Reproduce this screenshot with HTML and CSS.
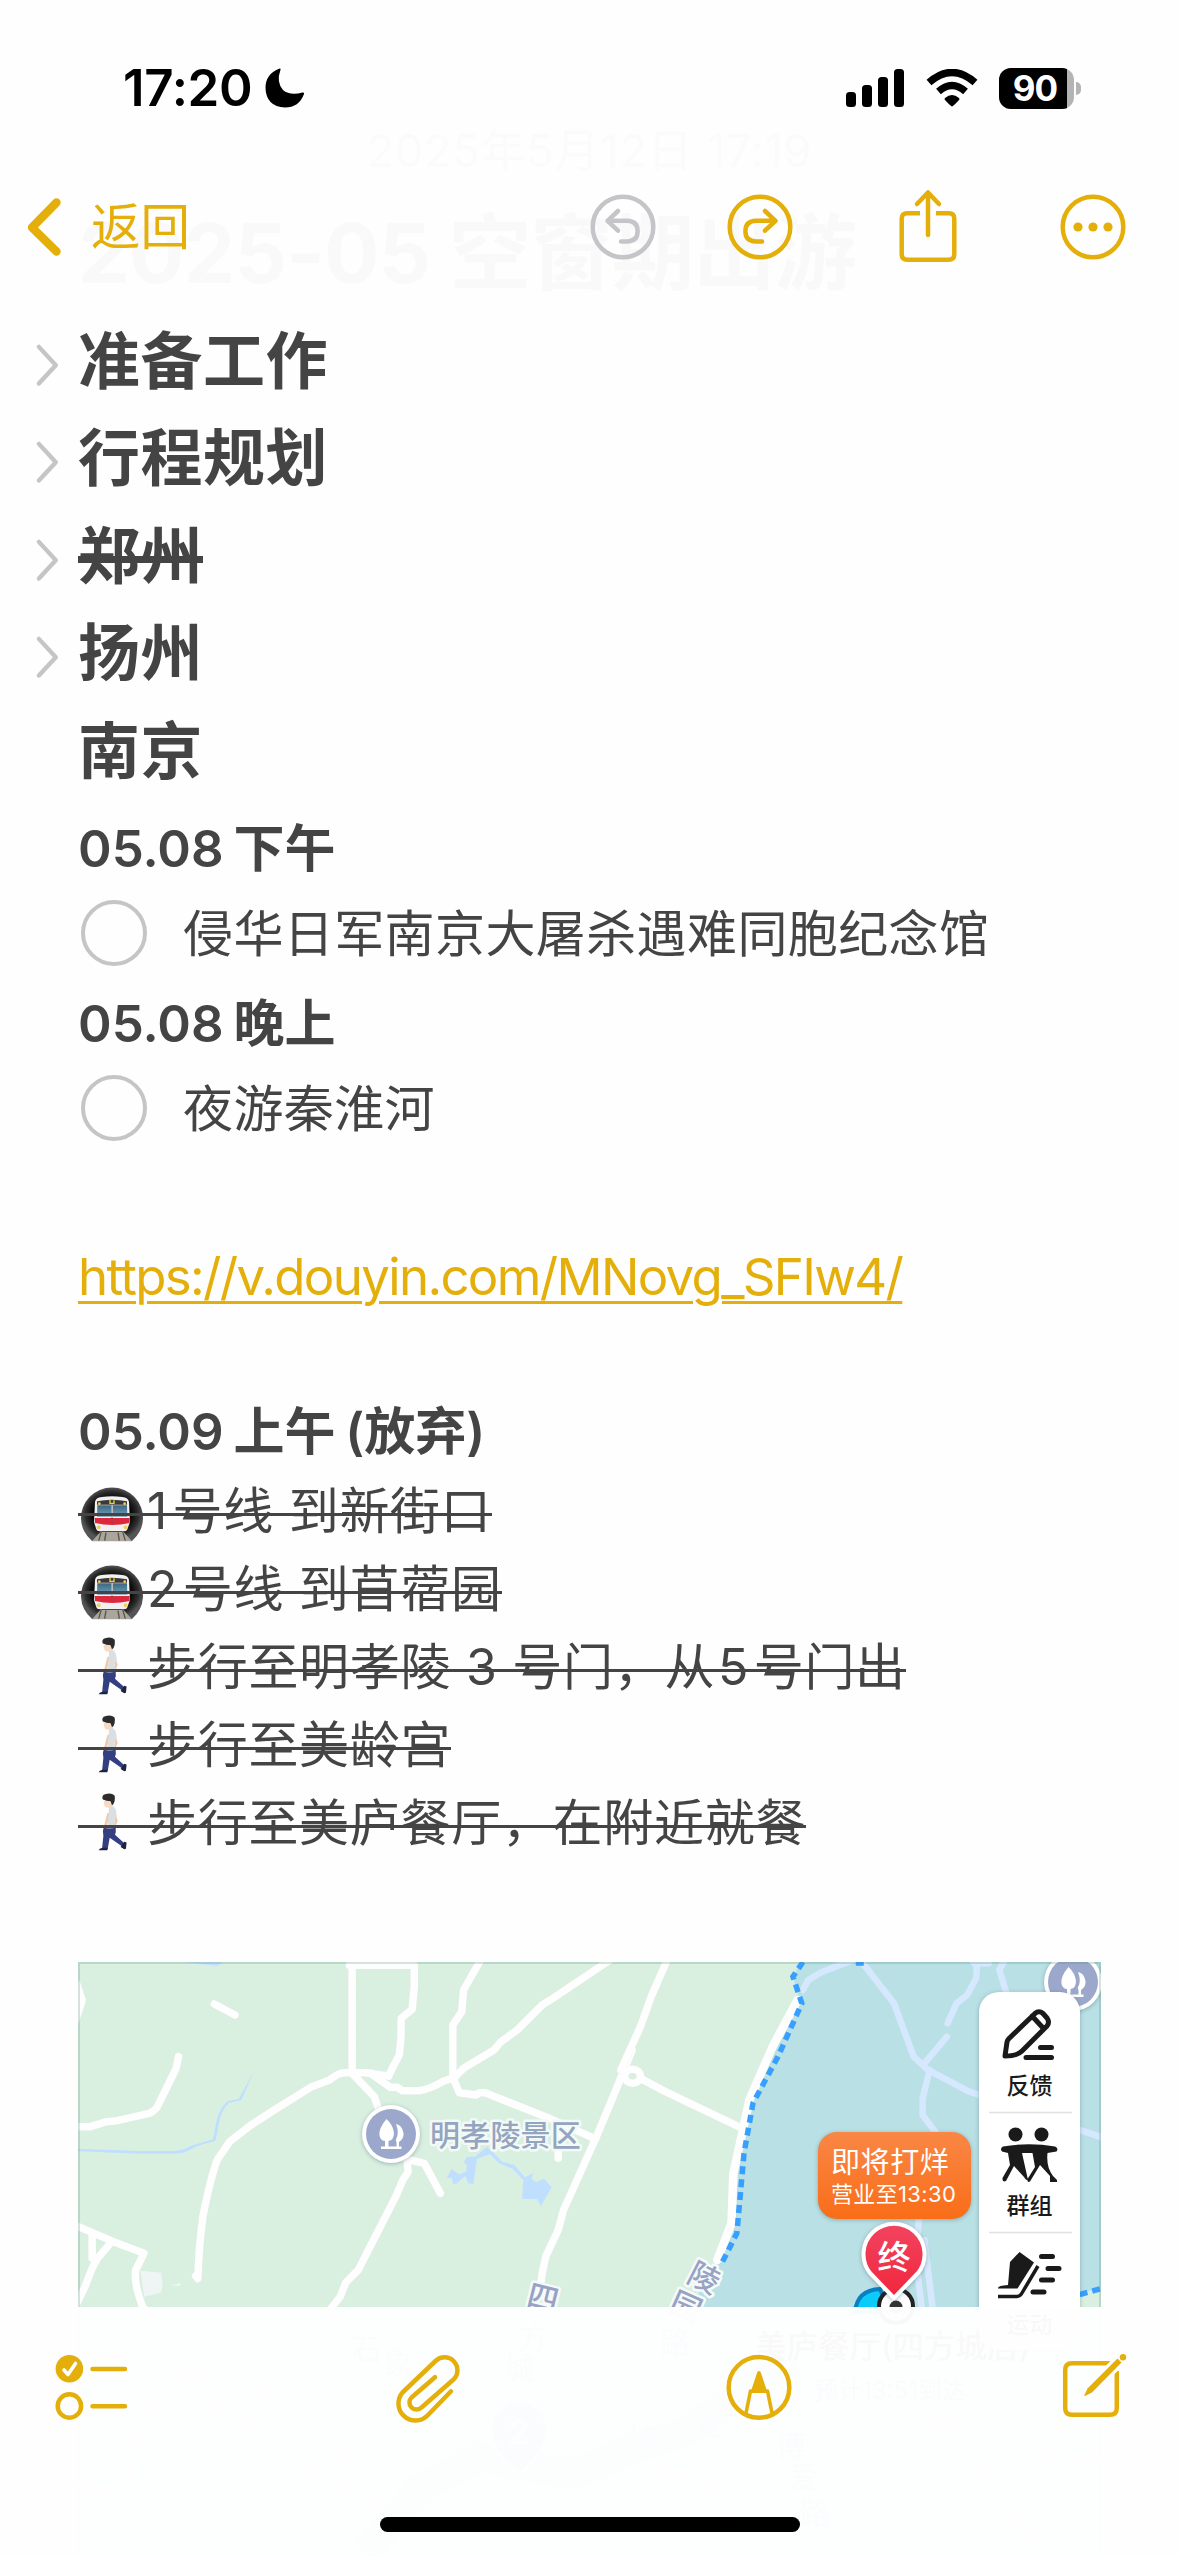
FILE: index.html
```html
<!DOCTYPE html>
<html lang="zh-CN">
<head>
<meta charset="utf-8">
<title>备忘录</title>
<link rel="stylesheet" href="styles.css">
</head>
<body>
<svg width="0" height="0" class="defs" aria-hidden="true">
  <defs>
    <linearGradient id="badge" x1="0" y1="0" x2="0" y2="1"><stop offset="0" stop-color="#f98746"/><stop offset="1" stop-color="#f96d17"/></linearGradient>
    <linearGradient id="pin" x1="0" y1="0" x2="0" y2="1"><stop offset="0" stop-color="#f24460"/><stop offset="1" stop-color="#f0263c"/></linearGradient>
    <radialGradient id="tunnel"><stop offset=".6" stop-color="#050505"/><stop offset=".85" stop-color="#2c2c2c"/><stop offset="1" stop-color="#555"/></radialGradient>
    <linearGradient id="glass" x1="0" y1="0" x2="0" y2="1"><stop offset="0" stop-color="#3f6680"/><stop offset="1" stop-color="#6ba3c0"/></linearGradient>
    <symbol id="metro" viewBox="234 310 207 180">
      <path d="M276 481A93 91 0 1 1 396 481Z" fill="url(#tunnel)"/>
      <path d="M276 482l25-28h70l25 28z" fill="#aaa69c"/>
      <path d="M304 452l-8 28M368 452l8 28M318 456l-4 24M354 456l4 24" stroke="#5a544c" stroke-width="4"/>
      <path d="M285 364q2-13 20-15 31-4 62 0 18 2 20 15l3 60-8 22q-1 6-10 6h-73q-9 0-10-6l-7-22z" fill="#f1f1f1"/>
      <path d="M291 362q45-10 90 0v10h-90z" fill="#3a3a3a"/>
      <path d="M292 374h42v34h-43zM339 374h42l1 34h-43z" fill="url(#glass)"/>
      <path d="M284 412h105v15q-52 12-104 0z" fill="#dc2a3c"/>
      <path d="M330 357v11h12v-9" fill="none" stroke="#e6d632" stroke-width="4"/>
      <g fill="#f3cf63"><circle cx="298" cy="369" r="4"/><circle cx="374" cy="369" r="4"/><circle cx="296" cy="440" r="6"/><circle cx="377" cy="440" r="6"/></g>
      <path d="M336 372v54" stroke="#555" stroke-width="2"/>
    </symbol>
    <symbol id="walker" viewBox="234 765 207 190">
      <path d="M311 795q0 15 7 19 6 2 11-1l8 10 2-30z" fill="#f8d9c1"/>
      <path d="M307 787q-1-9 8-12 18-6 28 3 4 5 1 17-2 9-8 13-3-9-5-13-12 1-18-3-6 0-6-5z" fill="#2d2b2c"/>
      <path d="M325 835l-9 36 3 8M342 835l7 20-11 28" fill="none" stroke="#f2c9a8" stroke-width="8" stroke-linecap="round"/>
      <path d="M327 813q14-9 21 10l3 22-8 4 5 30-26 2 3-35z" fill="#dcdfe2"/>
      <path d="M311 875q14 6 36 1 2 14-2 21l30 27-7 9-39-27-6 34h-17l4-40q-4-14 1-25z" fill="#333f80"/>
      <path d="M296 944q1-6 11-8h16l-1 8zM362 934l11-16 7 2-2 19-5 2z" fill="#1c2240"/>
    </symbol>
    <g id="trees">
      <circle r="29" fill="#fff"/><circle r="25" fill="#9ba8cc"/>
      <path d="M-4.5-15Q-13-5-11.500 2-10 7-6 7V12.500H-10V15H10.500V12.500H8V8Q13 5 12.500-1 11-9 5-10 8-2 6 3 4 6 5.500 8V12.500H-2.500V7Q3 6 3-1 2-9-4.500-15Z" fill="#fff"/>
    </g>
  </defs>
</svg>
<div class="screen">
  <main class="note">
    <p class="date">2025年5月12日 17:19</p>
    <h1 class="title">2025-05 空窗期出游</h1>

    <h2 class="heading"><svg class="fold" viewBox="0 0 42 97"><path d="M2 34 20 53.500 2 73"/></svg>准备工作</h2>
    <h2 class="heading"><svg class="fold" viewBox="0 0 42 97"><path d="M2 34 20 53.500 2 73"/></svg>行程规划</h2>
    <h2 class="heading"><svg class="fold" viewBox="0 0 42 97"><path d="M2 34 20 53.500 2 73"/></svg><span class="gone thick">郑州</span></h2>
    <h2 class="heading"><svg class="fold" viewBox="0 0 42 97"><path d="M2 34 20 53.500 2 73"/></svg>扬州</h2>
    <h2 class="heading plain">南京</h2>

    <h3 class="sub">05.08 下午</h3>
    <div class="todo"><span class="box"></span><span>侵华日军南京大屠杀遇难同胞纪念馆</span></div>
    <h3 class="sub">05.08 晚上</h3>
    <div class="todo"><span class="box"></span><span>夜游秦淮河</span></div>
    <p class="link"><a>https://v.douyin.com/MNovg_SFIw4/</a></p>
    <h3 class="sub dropped">05.09 上午 (放弃)</h3>
    <p class="line"><span class="gone"><svg class="emoji metro"><use href="#metro"/></svg><span><span class="digit">1</span>号线 到新街口</span></span></p>
    <p class="line"><span class="gone"><svg class="emoji metro"><use href="#metro"/></svg><span><span class="digit">2</span>号线 到苜蓿园</span></span></p>
    <p class="line"><span class="gone"><svg class="emoji"><use href="#walker"/></svg><span>步行至明孝陵 3 号门，从<span class="digit mid">5</span>号门出</span></span></p>
    <p class="line"><span class="gone"><svg class="emoji"><use href="#walker"/></svg><span>步行至美龄宫</span></span></p>
    <p class="line"><span class="gone"><svg class="emoji"><use href="#walker"/></svg><span>步行至美庐餐厅，在附近就餐</span></span></p>

    <svg class="map" viewBox="0 0 1023 594">
      <rect width="1023" height="594" fill="#d9f0e1"/>
      <g transform="translate(541 -22) scale(.35714 .33333)">
        <path d="M512 60L487 110 505 180 435 320 367 480 345 580 318 860 272 970 190 1120 1290 1120V1060L1352 1045V60Z" fill="#b9e0e4"/>
      </g>
      <g class="water" transform="translate(-18 -22) scale(.35714 .33333)">
        <path d="M345 66H455L440 78Z"/>
        <path d="M50 626L220 633H320Q345 632 365 618L428 598 440 535Q450 500 470 483L500 477 543 395 508 480 472 489Q455 510 448 535L436 600Q430 606 415 608L380 620Q355 638 325 641H220L50 634Z"/>
        <path d="M1083 714L1096 687 1118 703 1137 695 1139 676 1131 665 1140 650 1162 650 1195 620 1208 632 1238 665 1272 675 1302 712 1326 698 1320 716 1334 726 1355 716 1377 742 1361 771 1347 798 1335 777H1294L1297 720 1268 688 1228 668 1204 643 1168 656 1163 690 1158 732 1143 730 1135 708 1110 731 1100 732 1098 715Z"/>
        <path d="M225 992L283 998 288 1030 283 1058 236 1070ZM310 1036L338 1029 335 1038Z" fill="#eff4f5"/>
      </g>
      <g class="roads" transform="translate(-18 -22) scale(.35714 .33333)">
        <g id="west">
          <path d="M818 60V398M810 76H992V140L986 208 955 235V290L950 345 935 375 920 408"/>
          <path d="M380 1008L386 1016Q388 930 400 830 420 720 440 660L475 605 535 555 600 510 705 440 755 420Q780 398 795 398H855L920 408"/>
          <path d="M870 400L925 442H945L958 452H1005Q1030 450 1075 423L1105 412 1130 385 1215 330 1235 305 1280 270 1350 195 1380 175 1540 60"/>
          <path d="M1178 60L1130 150 1125 215 1100 255V412L1118 458 1165 465 1175 458H1190L1370 535 1500 597M818 400L880 470 893 510"/>
          <path d="M980 660L1020 670 1035 700 1065 760M972 665L975 695 960 720 940 770 835 990 800 1028 785 1070 755 1110"/>
          <path d="M1395 560V655M1602 330L1545 480 1500 595 1410 810 1395 870 1360 950 1350 1000 1345 1040"/>
          <path d="M40 560H85L130 545 160 542 250 520Q270 510 275 495L325 385 332 350M432 192L490 225"/>
          <path d="M40 855L150 905 235 940 212 990Q205 1030 235 1110M90 885V955M145 905L105 955 90 985 70 1040 45 1095M46 130L62 180 44 240"/>
        </g>
      </g>
      <g class="roads" transform="translate(541 -22) scale(.35714 .33333)">
        <path d="M135 60L90 170 60 260 5 390M60 415L130 455 335 560"/>
        <path d="M500 180L430 320 365 480 345 580 320 700 315 850 275 960" class="wide"/>
        <ellipse cx="38" cy="409" rx="22" ry="21"/>
      </g>
      <g class="blue-roads" transform="translate(541 -22) scale(.35714 .33333)">
        <path d="M515 150L530 120 570 95 650 62M680 66L770 190 825 350 865 390 980 455 1010 465M870 390L850 475V525L885 575M918 290L855 370M988 60L1002 80 1000 115 975 165 945 190 920 250M1035 70H1000M1080 60L1065 90 1085 160M1285 568L1352 592M840 837L830 950 850 1120M855 900L880 1120"/>
      </g>
      <g class="route" transform="translate(541 -22) scale(.35714 .33333)">
        <path d="M515 66L487 110 512 190 445 350 375 490 350 640 330 880 285 975M663 69H690M1290 1064L1352 1045"/>
      </g>

      <!-- lower part of the map, seen faintly through the toolbar -->
      <g transform="translate(-78 338) scale(.38267 .33333)" class="faint">
        <path d="M770 60L640 400 850 530 1040 640M370 22Q400 50 380 90L240 230M200 550L260 580 340 550 350 430 410 270 480 225 540 230 560 330 630 370M260 580L290 768M850 50L1280 280M940 200Q930 420 875 530L860 640"/>
      </g>
      <g transform="translate(501 338) scale(.38267 .33333)" class="faint">
        <path d="M250 180L230 340 170 480 210 520 340 540 380 640M600 410H740L820 460 960 350 1100 600 1200 740M1200 200V440L1260 490 1360 470"/>
        <path d="M-560 760L-420 570-260 470-100 510 0 520 130 450 270 400 400 300 560 180" class="thick-route"/>
      </g>
      <g class="ghost-labels">
        <text x="440" y="386">方</text><text x="426" y="417">城</text><text x="582" y="391">路</text>
        <text x="274" y="398">石</text><text x="305" y="411">象</text><text x="550" y="488">博</text><text x="614" y="473">爱</text>
        <text x="698" y="494">博</text><text x="710" y="526">爱</text><text x="722" y="562">路</text>
      </g>
      <path d="M441 513Q412 487 412 468A29 29 0 0 1 470 468Q470 487 441 513Z" fill="#7f9ff4" stroke="#fff" stroke-width="4"/>
      <text x="441" y="482" class="num">2</text>

      <use href="#trees" transform="translate(313 172)" class="lift"/>
      <text x="352" y="184" class="place">明孝陵景区</text>
      <text class="road-name" transform="translate(465 336) rotate(14)" dy="11">四</text>
      <text class="road-name" transform="translate(626 316) rotate(27)" dy="11">陵</text>
      <text class="road-name" transform="translate(608 345) rotate(24)" dy="11">园</text>

      <path d="M777 350Q779 328 802 327L812 350Z" fill="#0bcbfa" stroke="#0a7fc4" stroke-width="4"/>
      <circle cx="818" cy="344" r="17" fill="#fff" stroke="#222" stroke-width="4"/><circle cx="818" cy="345" r="6.500" fill="#333"/>
      <path d="M816 336L792 311A30.500 30.500 0 1 1 840 311Z" fill="url(#pin)" stroke="#fff" stroke-width="4" stroke-linejoin="round" class="lift"/>
      <text x="816" y="307" class="end">终</text>

      <rect x="740" y="170" width="153" height="87" rx="19" fill="url(#badge)" class="lift"/>
      <text x="753" y="211" class="closing">即将打烊</text>
      <text x="753" y="240" class="hours">营业至13:30</text>

      <text x="677" y="396" class="ghost-title">美庐餐厅(四方城店)</text>
      <text x="736" y="437" class="ghost-eta">预计13:51到达</text>

      <use href="#trees" transform="translate(995 20)" class="lift"/>
      <rect x="901" y="30" width="101" height="358" rx="20" fill="#fff" class="lift"/>
      <path d="M911 150.500H994M911 270.500H994" stroke="#e0e0e0" stroke-width="1.500"/>
      <g class="tool-line">
        <path d="M927 94L929 80Q929.500 78 931 76.500L957 51.500Q961 48 965 51.500L969 56Q972 60 969 64L944 89Q939 94 927 94ZM954 54L966 67"/>
        <path d="M962.500 85.500H973.500M948 95.500H973.500"/>
      </g>
      <g fill="#1a1a1a">
        <circle cx="937.500" cy="172.500" r="7"/><circle cx="963.500" cy="172.500" r="7"/>
        <path d="M925 184.500Q951 180 977 184.500Q981 186.500 978.500 189.500L969.500 191Q968 205 975 214L979 218V220H972V214L962 203 952 219.500Q949 221 949.500 217L957 205 954.500 191H944L950 218Q948 219 946 215L936 204 928 219Q924 220.500 924.500 216L932 203 930 191 924 189.500Q921.500 186.500 925 184.500Z"/>
        <path d="M941.500 290L956 300.500 939.500 326.500H920V326Q920 323.500 930 323L932 300Z"/>
      </g>
      <g class="tool-line"><path d="M920 334.500H939Q942 334.500 944 331L960 304" class="slim"/><path d="M963.500 294.500H974.500M970 306.500H981M963.500 318H974.500M955 330H966"/></g>
      <g class="tool-name"><text x="951.500" y="132">反馈</text><text x="951.500" y="252">群组</text><text x="951.500" y="371">运动</text></g>
      <path d="M1 594V1H1022V594" class="frame"/>
    </svg>
  </main>

  <header class="top">
    <div class="status">
      <span class="clock">17:20</span>
      <svg class="moon" width="40" height="40" viewBox="0 0 40 40"><path d="M14 .7Q16 0 15.500 1.800Q11 14 18 22Q25 28 37.500 24.500Q39.500 24 39 26Q34 39.500 20 39.500Q1 38.500.5 20Q.5 6 14 .7Z"/></svg>
      <svg class="signal" width="58" height="38" viewBox="0 0 58 38"><rect y="23" width="10" height="15" rx="3.500"/><rect x="16" y="16" width="10" height="22" rx="3.500"/><rect x="32" y="8" width="10" height="30" rx="3.500"/><rect x="48" width="10" height="38" rx="3.500"/></svg>
      <svg class="wifi" width="52" height="38" viewBox="0 0 52 38"><path d="M26 37.500Q25 37.500 19 31Q18 30 19 29Q26 23 33 29Q34 30 33 31Q27 37.500 26 37.500Z"/><path d="M12.500 22.500Q26 10.500 39.500 22.500" fill="none" stroke="#000" stroke-width="7.200"/><path d="M3 13.500Q26-6.500 49 13.500" fill="none" stroke="#000" stroke-width="7.400"/></svg>
      <span class="battery"><span class="level">90</span></span><span class="cap"></span>
    </div>
    <nav class="bar">
      <svg class="back-arrow" width="34" height="58" viewBox="0 0 34 58"><path d="M29.500 4.500 5 29.500 29.500 53.500"/></svg>
      <span class="back">返回</span>
      <svg class="icon undo" viewBox="0 0 66 66"><circle cx="33" cy="33" r="30.300"/><path d="M28 17 17.500 26.800 28 36.700M18 26.800H37Q47.600 27 47.600 37.300 47.600 47.300 37 47.400H31"/></svg>
      <svg class="icon redo" viewBox="0 0 66 66"><circle cx="33" cy="33" r="30.300"/><path d="M38 17 48.500 26.800 38 36.700M48 26.800H29Q18.400 27 18.400 37.300 18.400 47.300 29 47.400H35"/></svg>
      <svg class="icon share" viewBox="0 0 66 76"><path d="M25 24.200H12Q6.700 24.200 6.700 29.500V65Q6.700 70.800 12.500 70.800H53.500Q59.300 70.800 59.300 65V29.500Q59.300 24.200 54 24.200H41" class="butt"/><path d="M33 4V46M22 15 33 3.500 44 15"/></svg>
      <svg class="icon more" viewBox="0 0 66 66"><circle cx="33" cy="33" r="30.300"/><g class="solid"><circle cx="18" cy="33" r="4.600"/><circle cx="33" cy="33" r="4.600"/><circle cx="48" cy="33" r="4.600"/></g></svg>
    </nav>
  </header>

  <footer class="bottom">
    <div class="tools">
      <svg class="icon list" viewBox="53 2350 76 76"><circle cx="69.400" cy="2368.800" r="13.800" class="solid"/><path d="M64 2370 68 2374.500 75.500 2363.500" class="tick"/><circle cx="69.400" cy="2406" r="11.700"/><path d="M92.500 2369H125M92.500 2406.200H125"/></svg>
      <svg class="icon clip" viewBox="390 2350 76 76"><path d="M451 2391.300L427.500 2415.500A17 17 0 0 1 402.500 2392.500L435.500 2361A12.800 12.800 0 0 1 453.500 2379.500L421.500 2407.500A7 7 0 0 1 411.500 2397.500L435 2377.200"/></svg>
      <svg class="icon pen" viewBox="720.500 2350 76 76"><circle cx="758.500" cy="2387.400" r="30.300"/><path d="M758.500 2371Q760 2371 760.500 2373L766 2389.500 768.500 2391.500V2393H748.500V2391.500L751 2389.500 756.500 2373Q757 2371 758.500 2371Z" class="solid"/><path d="M750 2391 745.500 2413M767 2391 771.500 2413" class="thin"/></svg>
      <svg class="icon compose" viewBox="1053 2350 76 76"><path d="M1110 2363.300H1072Q1065.200 2363.300 1065.200 2370V2408Q1065.200 2414.800 1072 2414.800H1110Q1116.800 2414.800 1116.800 2408V2371" class="butt"/><path d="M1119 2361 1089 2391.500" class="halo"/><path d="M1117.500 2358.500 1121.500 2362.500 1092 2392.500 1085 2396 1084.200 2395.500 1087.500 2388.500Z" class="solid"/><circle cx="1123" cy="2357.200" r="3.200" class="solid"/></svg>
    </div>
    <div class="home"></div>
  </footer>
</div>
</body>
</html>
```
FILE: styles.css
```css
* { box-sizing: border-box; margin: 0; padding: 0; }
body { background: #fefefe; color: #444; font-family: Inter, "Noto Sans CJK SC", sans-serif; }
.defs { position: absolute; }
.screen { position: relative; width: 1179px; height: 2556px; overflow: hidden; }

.note { padding: 123px 78px 0; }
.date { text-align: center; font-size: 45px; line-height: 56px; color: #77777c; letter-spacing: .8px; }
.title { margin-top: 22px; font-size: 82.5px; line-height: 104px; font-weight: 700; letter-spacing: -1px; white-space: nowrap; }
.title + .heading { margin-top: 7.5px; }
.heading { display: flex; align-items: center; height: 97.5px; margin-left: -41.5px; font-size: 62px; line-height: 97.5px; font-weight: 700; letter-spacing: .5px; }
.heading.plain { margin: 0 0 -1.5px; }
.fold { width: 39.5px; height: 97px; margin: -2px 2px 0 0; fill: none; stroke: #c5c5c7; stroke-width: 4.6; stroke-linecap: round; stroke-linejoin: round; overflow: visible; }

.sub { margin-top: 5px; font-size: 51px; line-height: 90px; font-weight: 600; word-spacing: -3px; }
.sub.dropped { margin-top: 73px; margin-bottom: -2px; line-height: 85px; }
.todo { display: flex; align-items: center; height: 80px; padding-left: 3px; font-size: 50px; line-height: 80px; letter-spacing: .4px; }
.box { width: 66px; height: 66px; margin: -2px 36px 0 0; border: 4.5px solid #c5c5c7; border-radius: 50%; }
.link { margin-top: 89px; font-size: 51px; line-height: 78px; letter-spacing: -1.67px; color: #e4af0a; white-space: nowrap; }
.link a { text-decoration: underline; text-decoration-thickness: 3px; text-underline-offset: 6px; }
.line { height: 78px; font-size: 50px; line-height: 78px; letter-spacing: .7px; white-space: nowrap; }
.digit { margin-right: 4.5px; }
.digit.mid { margin-left: 3px; }
.gone { position: relative; display: inline-flex; align-items: center; height: 78px; }
.gone::after { content: ""; position: absolute; left: 0; right: 0; top: 41px; height: 3px; background: #444; }
.gone.thick::after { top: 39px; height: 7px; }
.emoji { width: 69px; height: 63px; flex: none; }
.emoji.metro { height: 60px; margin-top: 6px; }

.map { display: block; width: 1023px; height: 594px; margin-top: 100px; font-family: Inter, "Noto Sans CJK SC", sans-serif; }
.map path, .map ellipse { vector-effect: non-scaling-stroke; }
.water { fill: #c0dfff; }
.roads { fill: none; stroke: #fefefe; stroke-width: 7.5; stroke-linecap: round; stroke-linejoin: round; filter: drop-shadow(0 0 1px #e6dfe2); }
.roads .wide { stroke-width: 8.500; }
.blue-roads { fill: none; stroke: #d5e8fe; stroke-width: 6.500; stroke-linecap: round; stroke-linejoin: round; }
.route { fill: none; stroke: #369fff; stroke-width: 5.5; stroke-dasharray: 8 5; }
.faint { fill: none; stroke: #fff; stroke-width: 9; }
.faint .thick-route { stroke: #7fdcfa; stroke-width: 30; opacity: .7; }
.lift { filter: drop-shadow(0 1px 2px rgba(40, 70, 90, .35)); }
.ghost-labels { font-size: 30px; fill: #8794bb; }
.num { font-size: 34px; font-weight: 700; fill: #fff; text-anchor: middle; }
.place { font-size: 30px; font-weight: 500; letter-spacing: .2px; fill: #93a5c1; stroke: #f3faf6; stroke-width: 5; paint-order: stroke; stroke-linejoin: round; }
.road-name { font-size: 31px; text-anchor: middle; fill: #97a3c5; stroke: #f6faf8; stroke-width: 5; paint-order: stroke; stroke-linejoin: round; font-weight: 500; }
.end { font-size: 33px; font-weight: 500; text-anchor: middle; fill: #fff; }
.closing { font-size: 29px; letter-spacing: .6px; fill: #fff; }
.hours { font-size: 22px; letter-spacing: .35px; fill: #fff; }
.ghost-title { font-size: 31.5px; font-weight: 500; fill: #333; }
.ghost-eta { font-size: 24px; fill: #6d86c8; }
.tool-line { fill: none; stroke: #1a1a1a; stroke-width: 5; stroke-linecap: round; stroke-linejoin: round; }
.tool-line .slim { stroke-width: 3.5; stroke-linecap: butt; }
.tool-name { font-size: 23px; font-weight: 500; text-anchor: middle; fill: #1a1a1a; }
.frame { fill: none; stroke: rgba(90, 140, 120, .25); stroke-width: 2; }

.top { position: absolute; inset: 0 0 auto; height: 300px; background: rgba(254, 254, 254, .976); }
.status { display: flex; align-items: center; height: 176px; padding-left: 123px; color: #000; }
.clock { width: 142px; font-size: 51px; font-weight: 600; letter-spacing: -.3px; line-height: 60px; }
.signal { margin-left: 541px; }
.wifi { margin-left: 22px; }
.battery { width: 75px; height: 41px; margin-left: 21px; border-radius: 12px; overflow: hidden; background: #b4b4b4; }
.level { display: block; width: 68px; height: 41px; background: #000; color: #fff; font-size: 35px; line-height: 41px; font-weight: 700; text-align: center; letter-spacing: -.8px; padding-left: 4px; }
.cap { width: 5px; height: 13px; margin-left: 2px; border-radius: 0 5px 5px 0; background: #b4b4b4; }
.bar { display: flex; align-items: center; height: 102px; padding-left: 27px; color: #e4af0a; }
.back-arrow { fill: none; stroke: #e4af0a; stroke-width: 8.4; stroke-linecap: round; stroke-linejoin: round; }
.back { width: 498.500px; margin-left: 30px; font-size: 49.5px; line-height: 60px; }
.icon { width: 66px; height: 66px; flex: none; fill: none; stroke: #e4af0a; stroke-width: 4.5; stroke-linecap: round; stroke-linejoin: round; }
.icon .solid { fill: #e4af0a; stroke: none; }
.icon .butt { stroke-linecap: butt; }
.icon .thin { stroke-width: 3.6; }
.icon .tick { stroke: #fefefe; stroke-width: 3.6; }
.icon .halo { stroke: #fefefe; stroke-width: 12; stroke-linecap: butt; }
.undo { stroke: #c5c5c9; }
.redo { margin-left: 71px; }
.share { height: 76px; margin-left: 102px; }
.more { margin-left: 99px; }

.bottom { position: absolute; inset: 2307px 0 0; background: rgba(254, 254, 254, .978); }
.tools { display: flex; padding: 43px 50px 0 53px; }
.tools .icon { width: 76px; height: 76px; }
.tools .clip { margin-left: 261px; }
.tools .pen { margin-left: 254.5px; }
.tools .compose { margin-left: 256.5px; }
.home { width: 420px; height: 15px; margin: 91px auto 0; border-radius: 8px; background: #000; }
```
